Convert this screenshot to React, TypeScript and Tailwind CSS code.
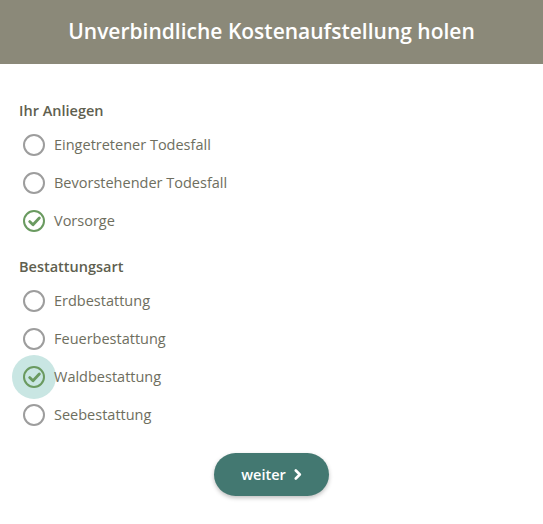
import React, { useState } from "react";

const font = { fontFamily: '"Open Sans", "Noto Sans", sans-serif' };

function Radio({ checked, halo }: { checked: boolean; halo?: boolean }) {
  return (
    <span className="relative flex h-[22px] w-[22px] shrink-0 items-center justify-center">
      {halo && (
        <span className="absolute left-1/2 top-1/2 h-[44px] w-[44px] -translate-x-1/2 -translate-y-1/2 rounded-full bg-[#c9e6e3]" />
      )}
      <span
        className={
          "relative flex h-[22px] w-[22px] items-center justify-center rounded-full border-2 " +
          (checked ? "border-[#6a9a60]" : "border-[#9d9d9d]")
        }
      >
        {checked && (
          <svg width="13" height="11" viewBox="0 0 13 11" fill="none">
            <path d="M1.7 5.6 L5 8.8 L11.3 2" stroke="#6a9a60" strokeWidth="2.8" strokeLinecap="round" strokeLinejoin="round" />
          </svg>
        )}
      </span>
    </span>
  );
}

function Group({ title, options, selected, halo }: { title: string; options: string[]; selected: string; halo?: string }) {
  return (
    <div>
      <div className="h-[19px] text-[14.5px] font-semibold leading-[19px] text-[#5f5f4f]">{title}</div>
      <div className="mt-[6px] flex flex-col">
        {options.map((o) => (
          <div key={o} className="flex h-[38px] items-center gap-[9px] pl-[4px]">
            <Radio checked={o === selected} halo={o === halo} />
            <span className="relative text-[14.5px] text-[#6e6e5e]">{o}</span>
          </div>
        ))}
      </div>
    </div>
  );
}

export default function App() {
  const [a] = useState("Vorsorge");
  const [b] = useState("Waldbestattung");
  return (
    <div className="h-[524px] w-[543px] bg-white" style={font}>
      <div className="flex h-[64px] items-center justify-center bg-[#8b8979] text-[21px] font-semibold text-white">
        Unverbindliche Kostenaufstellung holen
      </div>
      <div className="px-[19px] pt-[37px]">
        <Group
          title="Ihr Anliegen"
          options={["Eingetretener Todesfall", "Bevorstehender Todesfall", "Vorsorge"]}
          selected={a}
        />
        <div className="mt-[17px]">
          <Group
            title="Bestattungsart"
            options={["Erdbestattung", "Feuerbestattung", "Waldbestattung", "Seebestattung"]}
            selected={b}
            halo="Waldbestattung"
          />
        </div>
        <div className="mt-[19px] flex justify-center">
          <button className="flex h-[43px] w-[115px] items-center justify-center gap-[8px] rounded-full bg-[#437871] text-[14.5px] font-semibold text-white shadow-[0_2px_4px_rgba(0,0,0,0.25)]">
            weiter
            <svg width="8" height="11" viewBox="0 0 8 11" fill="none">
              <path d="M1.8 1.5 L5.8 5.5 L1.8 9.5" stroke="white" strokeWidth="2.6" strokeLinecap="round" strokeLinejoin="round" />
            </svg>
          </button>
        </div>
      </div>
    </div>
  );
}
